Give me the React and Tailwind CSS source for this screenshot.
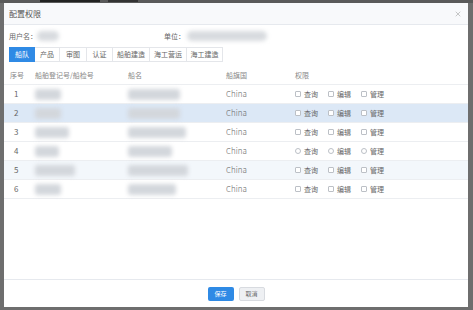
import { X } from 'lucide-react'

const tabs = [
  { t: '船队', w: 'w-[26px]' },
  { t: '产品', w: 'w-[25px]' },
  { t: '审图', w: 'w-[27px]' },
  { t: '认证', w: 'w-[26px]' },
  { t: '船舶建造', w: 'w-[37px]' },
  { t: '海工营运', w: 'w-[37px]' },
  { t: '海工建造', w: 'w-[36px]' },
]

const rows = [
  { no: 1, reg: 'w-[26px]', name: 'w-[52px]', bg: 'bg-white', radio: false },
  { no: 2, reg: 'w-[26px]', name: 'w-[52px]', bg: 'bg-[#dce8f6]', radio: false },
  { no: 3, reg: 'w-[34px]', name: 'w-[58px]', bg: 'bg-white', radio: false },
  { no: 4, reg: 'w-[24px]', name: 'w-[44px]', bg: 'bg-white', radio: true },
  { no: 5, reg: 'w-[40px]', name: 'w-[60px]', bg: 'bg-[#f3f7fb]', radio: false },
  { no: 6, reg: 'w-[26px]', name: 'w-[48px]', bg: 'bg-white', radio: false },
]

function Check({ radio, label }) {
  return (
    <span className="flex items-center gap-[3px] w-[33px]">
      <span
        className={`w-[6px] h-[6px] border border-[#bcc0c6] bg-white ${radio ? 'rounded-full' : 'rounded-[1px]'}`}
      />
      <span>{label}</span>
    </span>
  )
}

function Blob({ w }) {
  return <span className={`block h-[11px] ${w} rounded-[3px] bg-[#d3d7dc] blur-[2px]`} />
}

export default function App() {
  return (
    <div
      className="w-[473px] h-[310px] bg-[#6e6e6e] overflow-hidden flex flex-col"
      style={{ fontFamily: '"Noto Sans CJK SC", "Noto Sans", sans-serif' }}
    >
      {/* page behind the dialog */}
      <div className="h-[3px] bg-[#5a5a5a] flex gap-2 pl-[40px]">
        <span className="w-[60px] h-[2px] bg-[#222]" />
        <span className="w-[30px] h-[2px] bg-[#333]" />
      </div>

      <div className="flex-1 ml-[4px] mr-[5px] mb-[3px] bg-white flex flex-col">
        {/* Header */}
        <div className="h-[22px] bg-[#f8f9fb] border-b border-[#e6e9ee] flex items-center justify-between pl-[5px] pr-[6px]">
          <span className="text-[8px] text-[#555]">配置权限</span>
          <X size={8} className="text-[#aaa]" />
        </div>

        {/* User info */}
        <div className="flex items-center h-[22px] pl-[5px] text-[7px] text-[#666]">
          <span>用户名：</span>
          <span className="w-[22px] h-[10px] bg-[#d8dbdf] rounded-full blur-[2px]" />
          <span className="ml-[105px]">单位：</span>
          <span className="w-[80px] h-[10px] bg-[#d8dbdf] rounded-full blur-[2px] ml-[2px]" />
        </div>

        {/* Tabs */}
        <div className="flex pl-[5px] text-[7px]">
          {tabs.map(({ t, w }, i) => (
            <span
              key={t}
              className={`h-[15px] flex items-center justify-center border ${w} ${
                i === 0
                  ? 'bg-[#2f8ae5] border-[#2f8ae5] text-white'
                  : 'border-[#e4e6ea] border-l-0 text-[#666]'
              }`}
            >
              {t}
            </span>
          ))}
        </div>

        {/* Table */}
        <div className="mt-[5px] text-[7px]">
          <div className="h-[18px] flex items-center text-[#888] border-b border-[#eceef1]">
            <span className="w-[31px] pl-[6px]">序号</span>
            <span className="w-[93px]">船舶登记号/船检号</span>
            <span className="w-[98px]">船名</span>
            <span className="w-[69px]">船旗国</span>
            <span>权限</span>
          </div>
          {rows.map((r) => (
            <div
              key={r.no}
              className={`h-[19px] flex items-center text-[#666] border-b border-[#eceef1] ${r.bg}`}
            >
              <span className="w-[31px] pl-[10px] text-[8px]">{r.no}</span>
              <span className="w-[93px]"><Blob w={r.reg} /></span>
              <span className="w-[98px]"><Blob w={r.name} /></span>
              <span className="w-[69px] text-[8px] font-light">China</span>
              <span className="flex">
                <Check radio={r.radio} label="查询" />
                <Check radio={r.radio} label="编辑" />
                <Check radio={r.radio} label="管理" />
              </span>
            </div>
          ))}
        </div>

        <div className="flex-1" />

        {/* Footer */}
        <div className="h-[28px] border-t border-[#e6e9ee] flex items-center justify-center gap-[5px] text-[6px]">
          <button className="w-[26px] h-[14px] bg-[#2f8ae5] text-white rounded-[2px]">保存</button>
          <button className="w-[26px] h-[14px] bg-[#eef0f3] border border-[#d8dbe0] text-[#666] rounded-[2px]">取消</button>
        </div>
      </div>
    </div>
  )
}
